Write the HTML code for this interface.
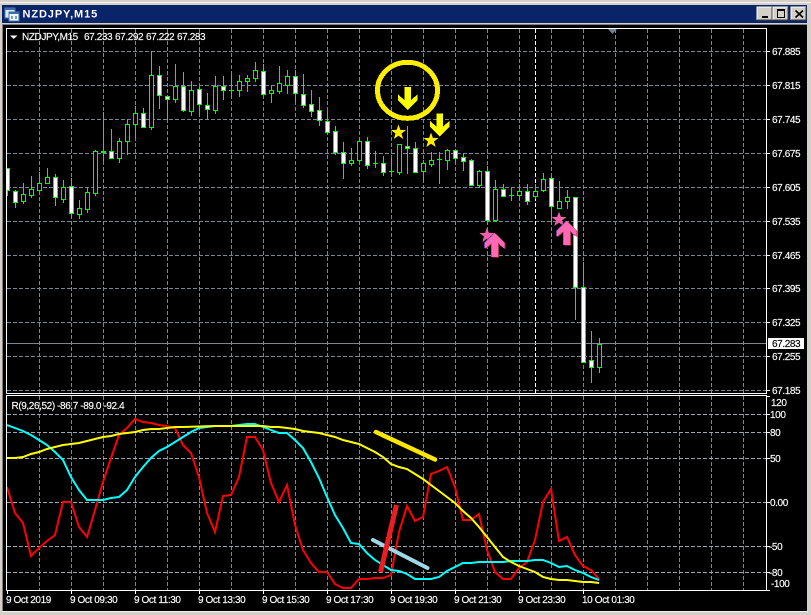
<!DOCTYPE html>
<html><head><meta charset="utf-8"><title>NZDJPY,M15</title>
<style>
html,body{margin:0;padding:0;background:#d4d0c8;width:811px;height:615px;overflow:hidden}
svg{display:block}
text{font-family:"Liberation Sans",sans-serif;font-size:10px;fill:#fff;letter-spacing:-.4px;stroke:#fff;stroke-width:.15px}
.c{shape-rendering:crispEdges}
</style></head><body>
<svg width="811" height="615" viewBox="0 0 811 615" xmlns="http://www.w3.org/2000/svg">
<defs>
<clipPath id="p"><rect x="7" y="29" width="759" height="364"/></clipPath>
<clipPath id="q"><rect x="7" y="396" width="759" height="194"/></clipPath>
</defs>
<rect width="811" height="615" fill="#d4d0c8"/>
<g class="c">
<rect x="0" y="2" width="811" height="1" fill="#f4f2ec"/>
<rect x="2" y="5" width="805" height="18" fill="#0a246a"/>
<rect x="2" y="24" width="805" height="1" fill="#808080"/>
<rect x="2" y="25" width="1" height="587" fill="#808080"/>
<rect x="3" y="25" width="804" height="586" fill="#000"/>
<rect x="2" y="611" width="806" height="1" fill="#f4f2ec"/>
</g>
<!-- title icon -->
<g class="c">
<rect x="5" y="8" width="10" height="10" fill="#dbe7f5" stroke="#4a78b5"/>
<rect x="5" y="8" width="10" height="2" fill="#3a6ea5"/>
<rect x="9" y="12" width="10" height="9" fill="#f2f6fb" stroke="#4a78b5"/>
<rect x="9" y="12" width="10" height="2" fill="#3a6ea5"/>
<path d="M11 16h2v3h-2zM15 16h2v3h-2z" fill="#7a9fd0"/>
</g>
<text x="22.5" y="17.5" style="font-size:11px;font-weight:bold;letter-spacing:.9px;stroke:none">NZDJPY,M15</text>
<!-- window buttons -->
<g class="c">
<rect x="757" y="7" width="15" height="13" fill="#d4d0c8"/><path d="M757 20V7h15" fill="none" stroke="#fff"/><path d="M772 7v13h-15" fill="none" stroke="#404040"/>
<rect x="762" y="16" width="6" height="2" fill="#000"/>
<rect x="773" y="7" width="15" height="13" fill="#d4d0c8"/><path d="M773 20V7h15" fill="none" stroke="#fff"/><path d="M788 7v13h-15" fill="none" stroke="#404040"/>
<rect x="777" y="9" width="8" height="2" fill="#000"/><rect x="777.5" y="10.5" width="7" height="7" fill="none" stroke="#000"/>
<rect x="791" y="7" width="15" height="13" fill="#d4d0c8"/><path d="M791 20V7h15" fill="none" stroke="#fff"/><path d="M806 7v13h-15" fill="none" stroke="#404040"/>
</g>
<path d="M795.5 10.5l7.5 7M803 10.5l-7.5 7" stroke="#000" stroke-width="1.6" fill="none"/>
<!-- grids -->
<g class="c" fill="none" stroke="#778899" stroke-dasharray="4 2">
<path d="M39.5 29V393M71.5 29V393M103.5 29V393M135.5 29V393M167.5 29V393M199.5 29V393M231.5 29V393M263.5 29V393M295.5 29V393M327.5 29V393M359.5 29V393M391.5 29V393M423.5 29V393M455.5 29V393M487.5 29V393M519.5 29V393M551.5 29V393M583.5 29V393M615.5 29V393M647.5 29V393M679.5 29V393M711.5 29V393M743.5 29V393"/>
<path d="M7 51.5H766M7 85.5H766M7 119.5H766M7 153.5H766M7 187.5H766M7 221.5H766M7 255.5H766M7 288.5H766M7 322.5H766M7 356.5H766M7 390.5H766"/>
<path d="M39.5 396V590M71.5 396V590M103.5 396V590M135.5 396V590M167.5 396V590M199.5 396V590M231.5 396V590M263.5 396V590M295.5 396V590M327.5 396V590M359.5 396V590M391.5 396V590M423.5 396V590M455.5 396V590M487.5 396V590M519.5 396V590M551.5 396V590M583.5 396V590M615.5 396V590M647.5 396V590M679.5 396V590M711.5 396V590M743.5 396V590"/>
<path stroke="#9aa8b6" d="M7 414.5H766M7 432.5H766M7 458.5H766M7 502.5H766M7 546.5H766M7 572.5H766"/>
</g>
<path class="c" d="M535.5 29V393" stroke="#fff" stroke-dasharray="4 2" fill="none"/>
<path class="c" d="M7 343.5H767" stroke="#778899" fill="none"/>
<polygon points="608,29 617,29 612.5,34" fill="#708090"/>
<!-- candles -->
<g class="c" clip-path="url(#p)">
<path fill="none" stroke="#0f0" d="M7.5 168V196M15.5 190V208M23.5 183V204M31.5 176V198M39.5 172V190M47.5 168V183M55.5 174V206M63.5 180V203M71.5 178V218M79.5 200V219M87.5 187V213M95.5 150V196M103.5 112V162M111.5 129V158M119.5 138V163M127.5 119V155M135.5 106V138M143.5 108V128M151.5 51V130M159.5 66V109M167.5 95V120M175.5 64V103M183.5 72V112M191.5 81V116M199.5 85V115M207.5 93V119M215.5 76V114M223.5 76V100M231.5 75V97M239.5 75V97M247.5 75V92M255.5 62V82M263.5 64V95M271.5 85V103M279.5 66V94M287.5 70V94M295.5 70V102M303.5 74V108M311.5 90V117M319.5 97V126M327.5 111V135M335.5 126V155M343.5 142V179M351.5 148V166M359.5 139V162M367.5 137V169M375.5 151V168M383.5 156V176M391.5 158V175M399.5 144V175M407.5 126V174M415.5 142V173M423.5 160V181M431.5 152V167M439.5 152V184M447.5 149V170M455.5 149V163M463.5 153V171M471.5 159V185M479.5 170V188M487.5 166V224M495.5 180V220M503.5 184V197M511.5 188V201M519.5 184V200M527.5 184V205M535.5 184V199M543.5 173V192M551.5 176V223M559.5 181V208M567.5 190V209M575.5 197V320M583.5 262V362M591.5 331V383M599.5 338V373"/>
<path fill="none" stroke="#0f0" d="M229 90.5h5M373 163.5h5M389 171.5h5M437 159.5h5M509 195.5h5"/>
<rect x="101" y="151" width="5" height="2" fill="#0f0"/>
<path fill="#000" stroke="#0f0" d="M21.5 194.5h4v7h-4zM29.5 189.5h4v6h-4zM37.5 183.5h4v7h-4zM45.5 177.5h4v6h-4zM61.5 187.5h4v12h-4zM77.5 208.5h4v6h-4zM85.5 192.5h4v17h-4zM93.5 151.5h4v42h-4zM117.5 141.5h4v17h-4zM125.5 124.5h4v17h-4zM133.5 113.5h4v11h-4zM149.5 75.5h4v52h-4zM173.5 86.5h4v13h-4zM189.5 90.5h4v21h-4zM213.5 86.5h4v24h-4zM237.5 81.5h4v9h-4zM245.5 78.5h4v3h-4zM253.5 70.5h4v8h-4zM269.5 90.5h4v3h-4zM277.5 83.5h4v8h-4zM285.5 76.5h4v9h-4zM349.5 160.5h4v3h-4zM357.5 141.5h4v19h-4zM397.5 144.5h4v28h-4zM421.5 163.5h4v8h-4zM429.5 160.5h4v4h-4zM445.5 150.5h4v10h-4zM477.5 171.5h4v14h-4zM493.5 189.5h4v31h-4zM517.5 191.5h4v4h-4zM533.5 191.5h4v5h-4zM541.5 179.5h4v11h-4zM557.5 201.5h4v7h-4zM565.5 197.5h4v4h-4zM597.5 344.5h4v23h-4z"/>
<path fill="#fff" stroke="#0f0" d="M5.5 168.5h4v22h-4zM13.5 191.5h4v11h-4zM53.5 177.5h4v20h-4zM69.5 186.5h4v27h-4zM109.5 151.5h4v7h-4zM141.5 113.5h4v14h-4zM157.5 75.5h4v20h-4zM165.5 96.5h4v3h-4zM181.5 86.5h4v24h-4zM197.5 89.5h4v15h-4zM205.5 105.5h4v4h-4zM221.5 86.5h4v4h-4zM261.5 71.5h4v23h-4zM293.5 76.5h4v17h-4zM301.5 94.5h4v11h-4zM309.5 104.5h4v7h-4zM317.5 110.5h4v10h-4zM325.5 121.5h4v11h-4zM333.5 131.5h4v21h-4zM341.5 152.5h4v11h-4zM365.5 141.5h4v24h-4zM381.5 163.5h4v9h-4zM405.5 146.5h4v2h-4zM413.5 148.5h4v24h-4zM453.5 150.5h4v8h-4zM461.5 157.5h4v4h-4zM469.5 160.5h4v25h-4zM485.5 171.5h4v49h-4zM501.5 189.5h4v7h-4zM525.5 191.5h4v10h-4zM549.5 178.5h4v28h-4zM573.5 197.5h4v90h-4zM581.5 287.5h4v75h-4zM589.5 360.5h4v7h-4z"/>
</g>
<!-- frames -->
<g class="c" fill="none" stroke="#fff">
<path d="M6.5 393.5V28.5H766.5V393.5H6.5"/>
<path d="M6.5 590.5V395.5H766.5V590.5H6.5"/>
<path d="M767 51.5h3M767 85.5h3M767 119.5h3M767 153.5h3M767 187.5h3M767 221.5h3M767 255.5h3M767 288.5h3M767 322.5h3M767 356.5h3M767 390.5h3"/>
<path d="M767 414.5h3M767 432.5h3M767 458.5h3M767 502.5h3M767 546.5h3M767 572.5h3M767 590.5h3M767 396.5h3"/>
<path d="M7.5 590v4M71.5 590v4M135.5 590v4M199.5 590v4M263.5 590v4M327.5 590v4M391.5 590v4M455.5 590v4M519.5 590v4M583.5 590v4"/>
</g>
<polygon points="10,35.5 17.5,35.5 13.75,39" fill="#fff"/>
<text x="22" y="40">NZDJPY,M15</text>
<text x="84" y="40">67.233</text><text x="115" y="40">67.292</text><text x="146" y="40">67.222</text><text x="177" y="40">67.283</text>
<!-- price axis -->
<text x="772" y="55">67.885</text><text x="772" y="89">67.815</text><text x="772" y="123">67.745</text><text x="772" y="157">67.675</text><text x="772" y="191">67.605</text><text x="772" y="225">67.535</text><text x="772" y="259">67.465</text><text x="772" y="292">67.395</text><text x="772" y="326">67.325</text><text x="772" y="360">67.255</text><text x="772" y="394">67.185</text>
<rect class="c" x="768" y="338" width="36" height="11" fill="#fff"/>
<text x="772" y="347" style="fill:#000;stroke:#000">67.283</text>
<!-- indicator axis -->
<text x="771" y="406">120</text><text x="770" y="418">100</text><text x="770" y="436">80</text><text x="770" y="462">50</text><text x="770" y="506">0.00</text><text x="769" y="550">-50</text><text x="769" y="576">-80</text><text x="771" y="587">-100</text>
<text x="11.5" y="409">R(9,26,52) -86.7 -89.0 -92.4</text>
<!-- time axis -->
<text x="6" y="603">9 Oct 2019</text><text x="70" y="603">9 Oct 09:30</text><text x="134" y="603">9 Oct 11:30</text><text x="198" y="603">9 Oct 13:30</text><text x="262" y="603">9 Oct 15:30</text><text x="326" y="603">9 Oct 17:30</text><text x="390" y="603">9 Oct 19:30</text><text x="454" y="603">9 Oct 21:30</text><text x="518" y="603">9 Oct 23:30</text><text x="582" y="603">10 Oct 01:30</text>
<!-- indicator lines -->
<g clip-path="url(#q)" fill="none" stroke-width="2">
<polyline stroke="#f00" points="7,487 15,513 23,523 31,556 39,548 47,541 55,535 63,502 71,502 79,527 87,537 95,510 103,482 111,458 119,435 127,428 135,419 143,422 151,423 159,425 167,426 175,428 183,445 191,453 199,477 207,513 215,532 223,496 231,495 239,477 247,437 255,437 263,450 271,483 279,502 287,485 295,525 303,550 311,563 319,572 327,572 335,584 343,588 351,588 359,579 367,579 375,578 383,578 391,575 399,532 407,506 415,521 423,517 431,474 439,471 447,467 455,487 463,520 471,520 479,514 487,550 495,572 503,579 511,579 519,568 527,562 535,540 543,502 551,489 559,541 567,537 575,555 583,566 591,570 599,579"/>
<polyline stroke="#0ff" points="7,425 15,428 23,431 31,435 39,440 47,445 55,452 63,460 71,477 79,490 87,500 95,500 103,500 111,498 119,497 127,490 135,477 143,467 151,458 159,451 167,447 175,442 183,437 191,432 199,428 207,427 215,426 223,426 231,426 239,425 247,424 255,424 263,427 271,430 279,433 287,433 295,440 303,448 311,462 319,478 327,497 335,515 343,528 351,543 359,544 367,553 375,560 383,565 391,570 399,571 407,574 415,579 423,579 431,579 439,577 447,571 455,567 463,563 471,563 479,562 487,562 495,562 503,562 511,561 519,561 527,561 535,560 543,560 551,563 559,567 567,566 575,570 583,573 591,577 599,580"/>
<polyline stroke="#ff0" points="7,458 15,458 23,457 31,454 39,452 47,449 55,447 63,445 71,444 79,443 87,441 95,439 103,437 111,436 119,434 127,433 135,432 143,430 151,429 159,429 167,428 175,427 183,427 215,426 263,426 271,427 279,427 287,428 295,429 303,431 311,432 319,433 327,435 335,437 343,440 351,442 359,444 367,448 375,452 383,457 391,464 399,467 407,469 415,474 423,479 431,485 439,491 447,497 455,503 463,511 471,518 479,527 487,537 495,547 503,557 511,562 519,566 527,569 535,572 543,577 551,579 559,580 567,580 575,581 583,582 591,582 599,583"/>
</g>
<!-- trend lines -->
<g fill="none">
<line x1="376" y1="432" x2="435" y2="459.5" stroke="#ffe600" stroke-width="4.5" stroke-linecap="round"/>
<line x1="373" y1="540" x2="427.5" y2="568" stroke="#9ed8e8" stroke-width="4" stroke-linecap="round"/>
<line x1="396.5" y1="505" x2="380.5" y2="572" stroke="#ed1c24" stroke-width="5"/>
</g>
<!-- yellow objects -->
<ellipse class="c" cx="407.5" cy="90.3" rx="30" ry="28" fill="none" stroke="#ffee00" stroke-width="5"/>
<polygon class="c" points="404.5,87 411,87 411,100 417.5,94.5 417.5,100.5 407.7,110 398,100.5 398,94.5 404.5,100" fill="#ff0"/>
<polygon class="c" transform="translate(32 26.5)" points="404.5,87 411,87 411,100 417.5,94.5 417.5,100.5 407.7,110 398,100.5 398,94.5 404.5,100" fill="#ff0"/>
<polygon transform="translate(398.5 132.5)" points="0,-8 1.9,-2.6 7.6,-2.5 3,1 4.7,6.5 0,3.2 -4.7,6.5 -3,1 -7.6,-2.5 -1.9,-2.6" fill="#ffee00"/>
<polygon transform="translate(431 140.5)" points="0,-8 1.9,-2.6 7.6,-2.5 3,1 4.7,6.5 0,3.2 -4.7,6.5 -3,1 -7.6,-2.5 -1.9,-2.6" fill="#ffee00"/>
<!-- pink objects -->
<polygon transform="translate(487 235.5)" points="0,-8 1.9,-2.6 7.6,-2.5 3,1 4.7,6.5 0,3.2 -4.7,6.5 -3,1 -7.6,-2.5 -1.9,-2.6" fill="#f060a8"/>
<polygon transform="translate(559 219.5)" points="0,-8 1.9,-2.6 7.6,-2.5 3,1 4.7,6.5 0,3.2 -4.7,6.5 -3,1 -7.6,-2.5 -1.9,-2.6" fill="#f060a8"/>
<g class="c">
<polygon transform="translate(-.8 0)" points="491.7,257 498,257 498,243 504.5,248.5 504.5,242.5 494.8,233 485,242.5 485,248.5 491.7,243" fill="#6a3fb0"/>
<polygon transform="translate(.8 .6)" points="491.7,257 498,257 498,243 504.5,248.5 504.5,242.5 494.8,233 485,242.5 485,248.5 491.7,243" fill="#b03050"/>
<polygon points="491.7,257 498,257 498,243 504.5,248.5 504.5,242.5 494.8,233 485,242.5 485,248.5 491.7,243" fill="#ff69b4"/>
<polygon transform="translate(71.2 -12)" points="491.7,257 498,257 498,243 504.5,248.5 504.5,242.5 494.8,233 485,242.5 485,248.5 491.7,243" fill="#6a3fb0"/>
<polygon transform="translate(72.8 -11.4)" points="491.7,257 498,257 498,243 504.5,248.5 504.5,242.5 494.8,233 485,242.5 485,248.5 491.7,243" fill="#b03050"/>
<polygon transform="translate(72 -12)" points="491.7,257 498,257 498,243 504.5,248.5 504.5,242.5 494.8,233 485,242.5 485,248.5 491.7,243" fill="#ff69b4"/>
</g>
</svg>
</body></html>
